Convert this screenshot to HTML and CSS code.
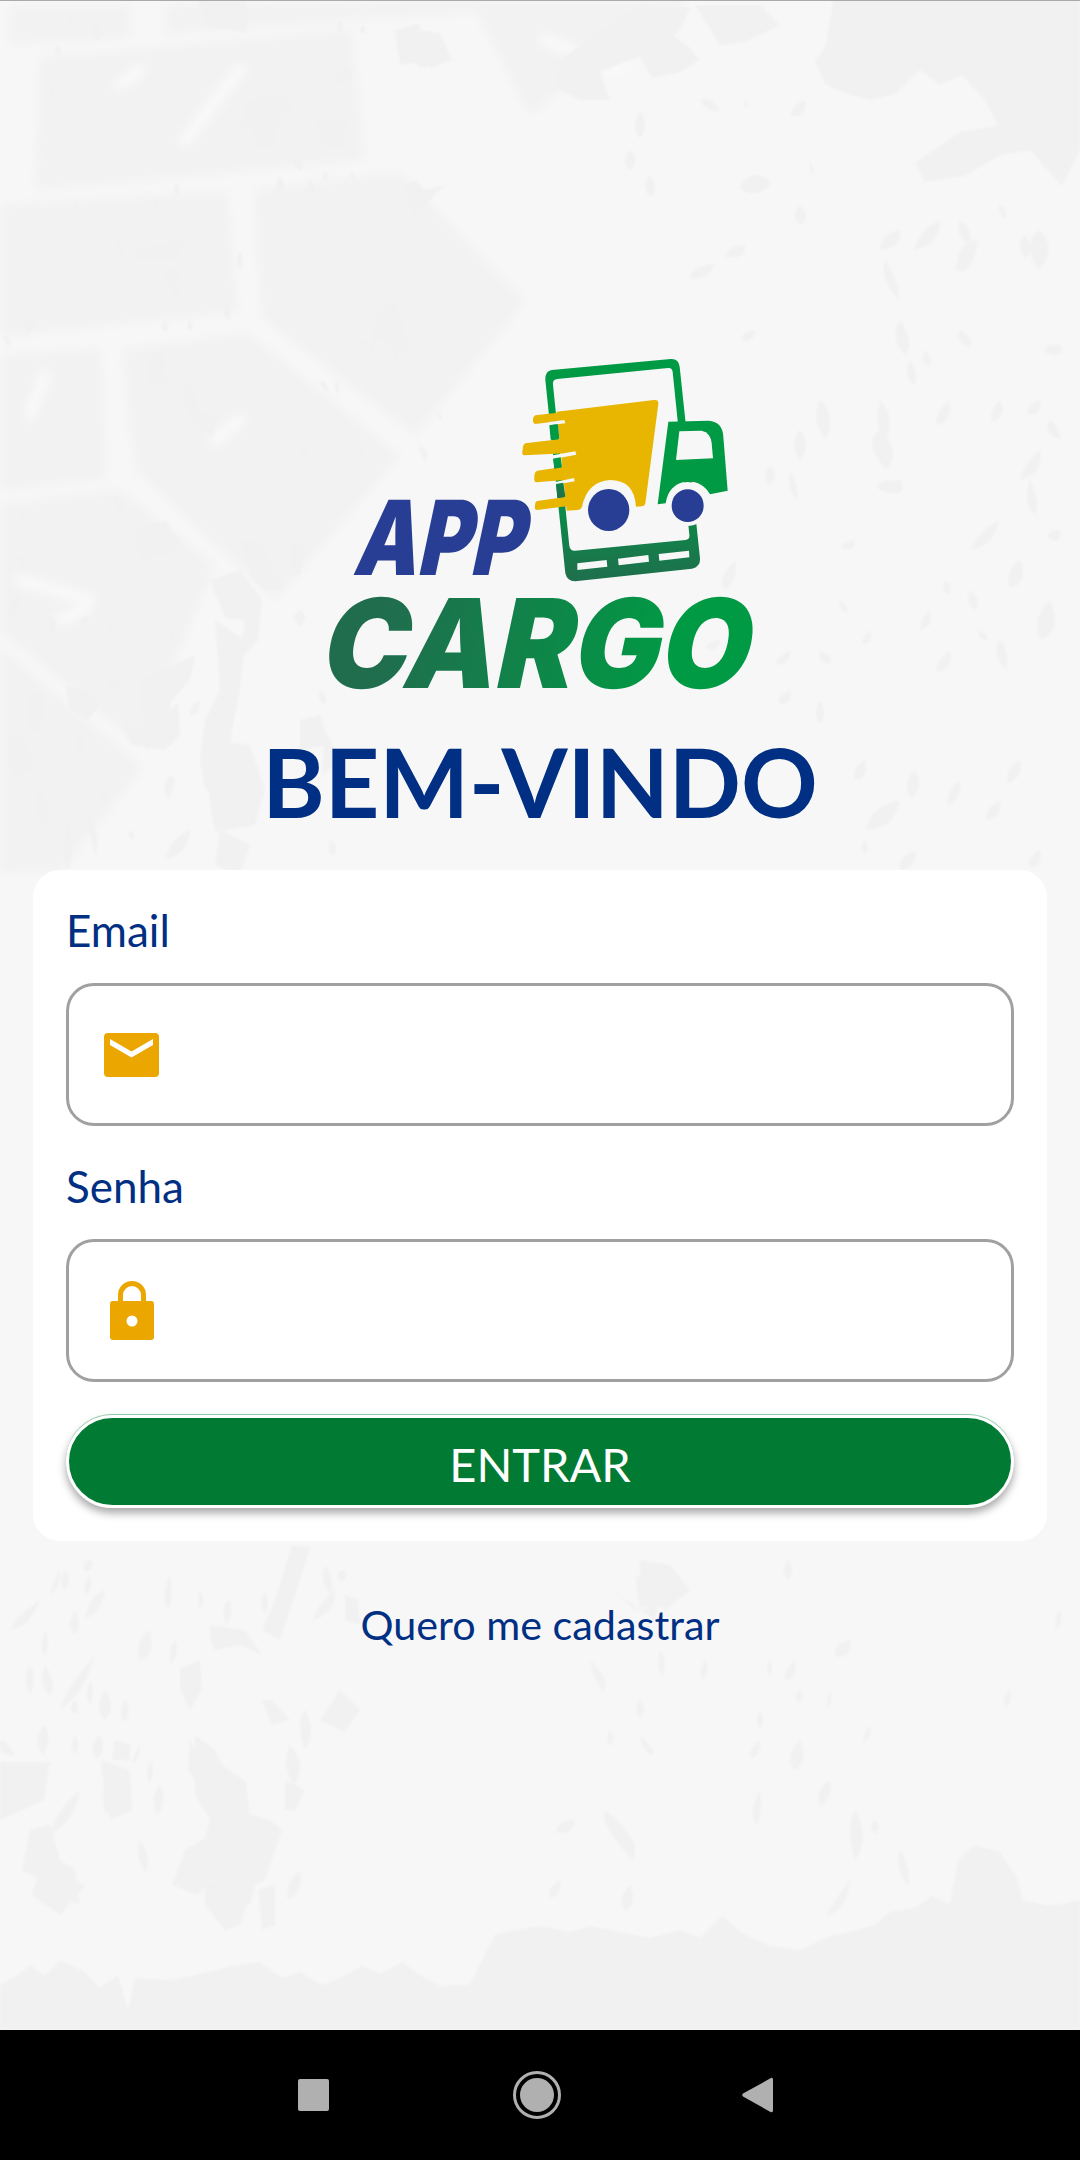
FILE: index.html
```html
<!DOCTYPE html>
<html lang="pt-BR">
<head>
<meta charset="utf-8">
<title>App Cargo</title>
<link rel="stylesheet" href="styles.css">
</head>
<body>
<main class="screen">
  <svg class="texture" viewBox="0 0 1080 2030" aria-hidden="true">
    <defs>
      <filter id="soft" x="-5%" y="-5%" width="110%" height="110%"><feGaussianBlur stdDeviation="5"/></filter>
      <filter id="round" x="-2%" y="-2%" width="104%" height="104%"><feGaussianBlur stdDeviation="1"/></filter>
    </defs>
    <g class="blocks" filter="url(#soft)">
      <polygon points="10,5 130,5 130,38 10,44"/>
      <polygon points="165,5 530,0 470,12 350,20 165,33"/>
      <polygon points="40,58 352,30 364,160 35,190"/>
      <polygon points="0,205 227,192 238,312 0,336"/>
      <polygon points="255,190 400,172 525,302 415,435 262,318"/>
      <polygon points="0,356 100,348 106,478 0,490"/>
      <polygon points="122,350 248,333 400,456 275,600 135,470"/>
      <polygon points="0,505 120,490 215,565 140,745 0,630"/>
      <polygon points="0,648 143,767 60,872 0,872"/>
      <polygon points="540,0 690,0 600,60 530,115 470,0"/>
    </g>
    <g class="streaks" filter="url(#soft)">
      <line x1="185" y1="140" x2="240" y2="70"/>
      <line x1="120" y1="85" x2="140" y2="70"/>
      <line x1="30" y1="415" x2="45" y2="375"/>
      <line x1="215" y1="440" x2="240" y2="420"/>
      <line x1="20" y1="580" x2="90" y2="600"/>
      <line x1="60" y1="620" x2="85" y2="610"/>
      <line x1="545" y1="40" x2="620" y2="70"/>
    </g>
    <g filter="url(#round)">
    <path class="blot" d="M0 2030V1985L18 1975 30 1965 45 1976 60 1960 85 1972 100 1988 118 1975 128 2010 135 1978 170 1980 200 1974 232 1966 260 1962 282 1978 300 1972 322 1985 340 1978 362 1966 380 1974 402 1962 420 1975 440 1986 470 1985 486 1952 496 1934 540 1926 570 1932 590 1926 620 1932 650 1938 680 1930 700 1938 722 1916 745 1935 770 1946 800 1950 830 1936 850 1932 875 1925 890 1912 915 1908 932 1896 950 1905 958 1860 975 1845 1000 1852 1018 1880 1022 1900 1050 1906 1080 1900V2030Z"/>
    <path class="blot" d="M833 0L830 20 825 48 815 60 825 84 850 95 870 100 895 94 920 70 940 85 962 75 985 100 998 126 960 132 915 163 925 182 965 176 1000 155 1030 150 1062 186 1080 150V0Z"/>
    <path class="blot" d="M198 1L246 1 247 33 228 29 210 28 203 15Z
      M560 60L600 30 640 5 690 8 680 30 655 50 625 62 600 72 610 100 580 100 555 88Z
      M625 10L660 25 690 48 700 60 680 72 652 78 630 40Z
      M247 100L282 95 292 110 278 122 275 150 258 148 250 125 240 128Z
      M314 118L340 120 346 150 324 146Z
      M344 65L352 68 350 82 330 83Z
      M395 30L420 23 420 30 440 33 452 60 432 68 418 62 400 65 398 52Z
      M400 45L425 42 442 52 445 62 420 68Z
      M140 248L188 238 176 262 165 260 160 258 135 258Z
      M166 266L180 268 176 288 165 280Z
      M150 353L164 352 166 380 150 394Z
      M180 388L190 385 200 410 216 420 212 436 195 425 185 405Z
      M380 310L396 300 408 350 394 355 376 330Z
      M376 315L392 320 368 355Z
      M403 185L415 180 425 190 445 185 430 200 413 215Z
      M140 525L165 522 180 540 168 555 140 560 136 540Z
      M210 580L240 570 262 600 258 640 240 660 245 620 225 618Z
      M140 680L195 655 190 680 172 700 160 745 145 750Z
      M215 620L245 640 240 690 232 730 225 770 205 790 200 760 205 720 220 690Z
      M205 740L250 745 265 790 255 825 215 832 208 790Z
      M120 725L155 728 178 702 180 735 165 750 132 745Z
      M65 685L85 690 100 705 88 720 70 710Z
      M30 690L45 700 40 730 30 735Z
      M10 730L30 750 32 770 15 775 8 760Z
      M8 740L25 735 28 770 12 780Z
      M240 540L262 545 275 575 285 590 265 590 250 575Z
      M290 540L305 550 300 575 290 575Z
      M220 830L250 845 240 875 215 865Z
      M300 720L320 715 330 745 300 750Z
      M325 730L340 760 322 775Z
      M695 5L760 5 780 25 745 42 720 45Z"/>
    <path class="blot" d="M0 1762L50 1762 44 1800 0 1820Z
      M100 1760L130 1770 132 1810 110 1820 105 1790Z
      M195 1735L215 1750 222 1765 246 1782 250 1815 270 1820 282 1830 265 1880 255 1885 250 1905 225 1890 210 1880 198 1895 172 1885 178 1870 185 1850 205 1838 210 1820 195 1795Z
      M30 1830L50 1825 60 1860 75 1870 80 1905 55 1895 40 1880 22 1870Z
      M40 1870L85 1885 60 1915 32 1895Z
      M205 1880L250 1895 240 1925 225 1930 205 1905Z
      M258 1890L275 1885 275 1925 262 1930Z
      M285 1780L305 1790 295 1810 285 1810Z
      M190 1740L205 1765 200 1785 188 1770Z
      M292 1545L310 1548 295 1595 280 1640 262 1630 275 1600Z
      M345 1595L358 1600 360 1625 345 1620Z
      M340 1690L360 1710 345 1732 320 1720Z
      M180 1668L200 1660 202 1690 190 1710 180 1690Z
      M210 1625L245 1630 262 1655 240 1645 215 1650 210 1640Z
      M262 1700L272 1700 290 1720 272 1725Z
      M115 1740L130 1745 130 1760 112 1760Z
      M640 1560L670 1565 690 1590 665 1610 640 1595Z
      M635 1575L660 1590 655 1620 640 1610Z
      M615 1592L640 1610 660 1600 650 1605 632 1610 640 1615Z"/>
    <g class="blot">
      <path d="M70 15q8 7 0 15q-7-7 0-15zM97 25q10 10 0 15q-10-8 0-15zM58 45q6 10 0 12q-5-5 0-12zM52 85q6 6 0 12q-6-6 0-12zM340 20q6 8 0 14q-6-6 0-14zM363 25q6 5 0 9q-6-4 0-9zM322 85q7 4 5 10q-7-4-5-10zM345 118q5 8 0 13q-5-5 0-13zM323 140q5 2 4 5q-5-2-4-5zM295 155q10 3 6 16q-10-4-6-16zM280 175q8 12 0 20q-8-8 0-20zM310 178q8 12 0 18q-6-8 0-18zM350 172q6 0 5 8q-5 0-5-8zM325 170q6 6 0 12q-5-4 0-12zM177 182q6 8 0 14q-6-8 0-14zM155 195q5 10 0 14q-5-4 0-14zM75 200q4 4 0 8q-4-4 0-8zM115 240q10 0 8 15q-8 0-8-15zM170 270q-6 14 10 30q0-18-10-30zM165 320q7 7 0 12q-7-5 0-12zM190 320q5 6 0 12q-5-6 0-12zM35 312q-12 10-10 25q12-8 10-25zM5 335q8 4 5 12q-8-4-5-12zM240 250q-6 10 0 20q6-8 0-20zM275 300q8 4 6 10q-8-4-6-10zM225 300q8 8 4 22q-8-8-4-22zM337 380q5 8 0 15q-5-7 0-15zM365 338q5 10 0 15q-5-5 0-15zM397 350q5 6 0 12q-5-6 0-12zM437 412q6 2 5 8q-6-2-5-8zM300 440q-5 15 5 18q5-10-5-18zM360 440q6 12 0 15q-6-5 0-15zM420 445q10 8 6 16q-8-8-6-16zM320 380q8 2 8 12q-8-2-8-12z"/>
      <path d="M22 510q6 8 0 15q-6-7 0-15zM115 495q12 8 6 20q-10-8-6-20zM18 555q10 0 8 15q-8 0-8-15zM165 520q-5 10 5 18q5-8-5-18zM50 615q10 4 4 22q-8-6-4-22zM18 590q-10 8-8 30q12-6 8-30zM115 672q8 10-2 22q-8-12 2-22zM85 615q8 4 0 12q-8-4 0-12zM130 620q10 2 8 10q-8 0-8-10zM170 630q8 5 5 12q-6-5-5-12zM110 620q8 5 2 15q-6-4-2-15zM200 700q-10 3-10 16q10-2 10-16zM300 610q-12 8 0 16q10-8 0-16zM320 690q8 5 5 15q-8-4-5-15zM80 730q-6 20 0 30q6-15 0-30zM100 790q10 6 6 18q-8-6-6-18zM170 775q10 4-2 24q-8-10 2-24zM190 830q-20 8-24 28q22-2 24-28zM285 800q-12 3-12 14q10 0 12-14zM330 840q10 5 4 16q-8-5-4-16zM85 810q6 30 10 45q8-20-10-45zM68 820q-8 40 0 50q8-15 0-50zM40 790q-10 16 4 40q14-16-4-40zM130 830q4 2 4 10q-8-2-4-10z"/>
      <path d="M612 40q-14 8-14 18q12 0 14-18zM720 10q-6 12 4 16q8-10-4-16zM630 150q10 10 0 20q-10-8 0-20zM640 110q10 16 0 28q-10-8 0-28zM650 175q-10 10 0 22q10-8 0-22zM700 100q6 12 20 12q-6-16-20-12zM677 20q-12 0-16 16q14 2 16-16zM746 100q-4 6 0 8q4-4 0-8zM752 175q18 0 18 10q-14 14-30 4q0-8 12-14zM745 245q-16 0-20 12q20 4 20-12zM715 265q-18-2-26 12q16 6 26-12zM755 330q-14 2-14 10q14 4 14-10zM800 205q-10 10 0 20q12-6 0-20zM805 100q-14 4-14 16q16 2 14-16zM810 160q4 10 4 16q-6-8-4-16zM940 220q-20 10-26 30q26-4 26-30zM1000 205q-4 8 6 14q2-10-6-14zM960 220q14 10 10 24q-16-8-10-24zM978 240q-20 0-22 30q16 8 22-30zM1025 235q-10 10 0 24q10-10 0-24zM900 230q-20 4-20 20q22-2 20-20zM885 260q16 26 14 40q-20-20-14-40zM900 320q16 22 5 35q-16-16-5-35zM925 350q10 10 4 16q-10-4-4-16zM880 400q-6 30 5 40q12-20-5-40zM880 430q-18 10 6 40q16-18-6-40zM950 400q-14 10-14 25q16-2 14-25zM910 360q10 16 4 25q-12-10-4-25zM960 330q-6 10 10 18q4-10-10-18zM1000 400q-8 5-4 20q10-8 4-20zM1040 230q-20 10-2 40q20-20 2-40zM1060 345q-20 0-14 8q20 6 14-8z"/>
      <path d="M800 430q-12 12 0 30q12-16 0-30zM770 465q10 10 0 20q-10-8 0-20zM735 560q-20 20-10 30q14-10 10-30zM820 400q16 14 6 40q-16-20-6-40zM855 540q-14 2-14 8q14 6 14-8zM900 480q-30 0-20 10q30 10 20-10zM945 580q-6 10 4 14q4-10-4-14zM790 470q8 14 8 30q-12-10-8-30zM1000 520q-20 10-30 30q22-2 30-30zM1000 400q-14 14-6 22q14-8 6-22zM1040 400q-14 4-12 14q14 4 12-14zM1040 450q-14 10-20 30q24-6 20-30zM970 590q12 10 6 20q-12-4-6-20zM1050 420q-10 10 10 20q0-14-10-20zM1030 480q10 20 6 35q-14-10-6-35zM1060 530q-14 0-12 8q14 8 12-8zM1020 560q-16 10-10 28q20-6 10-28zM980 630q8 4 8 10q-12 0-8-10zM1050 600q-18 16-10 40q24-10 10-40zM1000 640q-10 14 6 30q4-20-6-30zM930 610q-10 10-10 20q14-2 10-20zM950 650q-14 10-14 22q18-2 14-22zM720 640q-14 2-14 8q12 6 14-8zM870 630q-8 8-8 14q12 0 8-14zM840 600q8 6 8 12q-10 0-8-12zM820 650q14 6 10 14q-14-2-10-14zM790 650q-14 8-14 14q16 2 14-14zM915 770q-14 12-4 28q14-10 4-28zM900 800q-30 6-34 30q30-2 34-30zM960 780q-14 10-12 26q14-6 12-26zM1020 760q-16 8-12 24q16-8 12-24zM1000 800q-14 8-14 20q16 0 14-20zM790 690q-14 6-10 14q14 0 10-14zM820 700q8 12 0 24q-8-10 0-24zM915 850q-20 10-14 20q18-4 14-20zM865 760q-14 8-10 20q14 0 10-20zM865 840q-6 4 0 14q6-6 0-14zM1040 850q-14 8-10 18q14-2 10-18zM810 780q-6 10 0 16q6-8 0-16z"/>
      <path d="M60 1570q-6 10-10 24q12-6 10-24zM92 1560q-10 0-8 10q10 4 8-10zM65 1570q8 10 0 20q-8-8 0-20zM90 1575q-8 10-4 20q8-8 4-20zM105 1590q-16 6-20 28q16-4 20-28zM170 1575q4 24-2 34q-8-14 2-34zM200 1590q-4 10 0 20q6-8 0-20zM230 1600q-10 0-4 25q8-8 4-25zM265 1590q-6 14 0 24q6-10 0-24zM40 1600q-24 16-30 30q20-2 30-30zM75 1610q-10 16 0 24q8-8 0-24zM45 1630q-6 16 0 26q6-14 0-26zM150 1630q-16 10-10 30q16-4 10-30zM175 1640q-8 10-4 24q10-12 4-24zM30 1665q-8 14 0 30q8-16 0-30zM45 1665q-8 20 5 30q8-10-5-30zM95 1655q-26 30-36 55q26-16 36-55zM90 1680q-6 16 0 24q6-12 0-24zM125 1700q-8 12 0 22q8-12 0-22zM105 1690q-12 20 0 30q12-10 0-30zM75 1700q-8 8 0 14q6-4 0-14zM45 1725q-14 14-2 30q10-14 2-30zM75 1735q-6 12 0 20q6-12 0-20zM100 1735q-12 10-4 24q12-8 4-24zM140 1745q-4 4-8 18q8-2 8-18zM110 1770q-12 20-4 45q12-18 4-45zM150 1760q-6 14 0 24q6-14 0-24zM160 1785q-12 14-2 30q10-14 2-30zM80 1790q-24 20-30 44q24-10 30-44zM325 1565q-6 16 6 30q4-16-6-30zM305 1710q-10 14 0 40q12-20 0-40zM345 1570q-10 0-6 10q10 4 6-10zM335 1590q-16 12-22 30q24-8 22-30zM290 1745q-10 20 4 40q14-20-4-40zM0 1740q12 4 14 16q-16 0-14-16zM60 1880q-6 16 4 20q8-10-4-20zM140 1840q-6 16 6 34q6-18-6-34zM300 1870q-16 14-12 30q16-8 12-30z"/>
      <path d="M640 1700q-8 10 0 18q8-8 0-18zM660 1650q-4 16 2 26q6-14-2-26zM590 1660q4 22 14 32q6-14-14-32zM610 1730q-6 8 0 16q6-8 0-16zM575 1820q-16 0-20 12q18 4 20-12zM605 1810q-6 14 28 50q10-20-28-50zM640 1735q12 10 14 20q-12-2-14-20zM795 1660q-12 10-10 20q14-2 10-20zM850 1640q-18 4-14 16q16 4 14-16zM800 1690q6 10-2 12q-6-6 2-12zM770 1660q-6 10 0 16q4-10 0-16zM830 1690q-4 8-2 18q6-8 2-18zM800 1740q-16 16-6 30q16-8 6-30zM760 1710q-6 10 0 20q6-8 0-20zM830 1780q-16 10-10 26q14-8 10-26zM760 1790q-12 20-4 36q8-16 4-36zM760 1740q-10 6-10 18q12-2 10-18zM870 1725q-8 10-6 18q8-6 6-18zM788 1560q-8 10 0 20q8-10 0-20zM705 1660q-8 12-2 20q8-10 2-20zM855 1810q-10 16 0 50q16-22 0-50zM875 1820q-8 6 0 14q8-6 0-14zM1060 1610q-6 8-4 20q8-8 4-20zM1010 1690q-10 8-4 18q8-8 4-18zM850 1880q-18 24-24 36q22-6 24-36zM900 1850q-6 20 8 36q4-18-8-36zM960 1930q-6 30 0 40q6-20 0-40zM630 1885q-14 14-4 26q12-8 4-26zM560 1880q-14 8-10 18q12-2 10-18z"/>
    </g>
    </g>
  </svg>

  <svg class="logo" viewBox="0 0 1440 1140" role="img" aria-label="App Cargo">
    <defs>
      <linearGradient id="phoneGrad" x1="0" y1="0" x2="0" y2="1"><stop offset="0.5" stop-color="#009a44"/><stop offset="1" stop-color="#1f6f4d"/></linearGradient>
      <linearGradient id="cargoGrad" gradientUnits="userSpaceOnUse" x1="60" y1="0" x2="1050" y2="0"><stop offset="0.1" stop-color="#206d4e"/><stop offset="1" stop-color="#009a44"/></linearGradient>
    </defs>
    <path class="logo-phone" fill-rule="evenodd" d="M755 90L1112 57Q1136 55 1139 80L1200 655Q1202 680 1176 686L826 724Q802 725 796 700L736 120Q735 93 755 90ZM772 117Q757 118 759 134L808 618Q811 634 826 632L1156 600Q1170 598 1168 584L1118 96Q1116 82 1104 84ZM832 670L832 690 922 680 920 660ZM954 656L956 676 1047 665 1045 645ZM1076 642L1078 662 1168 652 1167 632Z"/>
    <circle class="logo-bg" cx="1163" cy="492" r="66"/>
    <path class="logo-cargo" d="M770 215L1062 180Q1076 178 1075 192L1036 490Q1034 499 1025 499L1008 500Q1003 420 930 420Q862 424 846 500Q843 509 832 510L800 512Z"/>
    <path class="logo-cab" d="M1105 245L1226 242Q1268 245 1270 290L1283 452 1230 463Q1205 420 1155 425Q1105 435 1097 490L1073 493Z"/>
    <path class="logo-bg" d="M1138 274L1205 272Q1232 278 1235 310L1239 355 1128 360Z"/>
    <path class="logo-cargo" d="M706 226L800 215 802 240 706 252Q696 250 700 232ZM676 310L790 296 830 328 828 338 672 346Q664 344 668 330 668 314 676 310ZM712 392L790 380 795 420 708 427Q700 426 704 402 705 394 712 392ZM712 483L800 470 805 498 712 510Q702 510 705 498 705 485 712 483Z"/>
    <path class="logo-bg" d="M747 246L793 240 796 250 747 256ZM758 346L826 334 829 344 758 358ZM766 426L822 414 824 424 766 434Z"/>
    <path class="logo-phone" d="M748 256L774 253 778 296 752 299ZM759 356L782 352 786 382 763 386ZM768 432L790 428 796 470 772 474Z"/>
    <ellipse class="logo-wheel" cx="926" cy="510" rx="62" ry="63"/>
    <ellipse class="logo-wheel" cx="1163" cy="497" rx="48" ry="49"/>
    <text class="logo-app" transform="translate(155 705) skewX(-12)" textLength="510" lengthAdjust="spacingAndGlyphs">APP</text>
    <text class="logo-name" transform="translate(52 1044) skewX(-12)" textLength="1285" lengthAdjust="spacingAndGlyphs">CARGO</text>
  </svg>

  <h1 class="title">BEM-VINDO</h1>

  <form class="card">
    <label class="label" for="email">Email</label>
    <div class="field">
      <span class="field-icon">
        <svg class="icon-mail" viewBox="0 0 55 44" aria-hidden="true"><path fill-rule="evenodd" d="M4 0H51Q55 0 55 4V40Q55 44 51 44H4Q0 44 0 40V4Q0 0 4 0ZM6 6V12L27.5 24.5 49 12V6L27.5 18.5Z"/></svg>
      </span>
      <input class="input" id="email" type="email">
    </div>
    <label class="label label-next" for="senha">Senha</label>
    <div class="field">
      <span class="field-icon">
        <svg class="icon-lock" viewBox="0 0 44 59" aria-hidden="true"><path fill-rule="evenodd" d="M8 20V14A14 14 0 0 1 36 14V20H41Q44 20 44 23V56Q44 59 41 59H3Q0 59 0 56V23Q0 20 3 20ZM13 20H31V14A9 9 0 0 0 13 14ZM22 34.500A5.500 5.500 0 1 0 22 45.500 5.500 5.500 0 1 0 22 34.500Z"/></svg>
      </span>
      <input class="input" id="senha" type="password">
    </div>
    <button class="submit" type="button">ENTRAR</button>
  </form>

  <a class="signup" href="#">Quero me cadastrar</a>
</main>
<nav class="navbar" aria-label="Navegação do sistema">
  <span class="nav-square"></span>
  <span class="nav-home"><span class="nav-home-dot"></span></span>
  <svg class="nav-back" viewBox="0 0 31 36" aria-hidden="true"><path d="M29 1Q31 0 31 3V33Q31 36 28.500 35L1 19.500Q-.5 18 1 16.500Z"/></svg>
</nav>
</body>
</html>
```

FILE: styles.css
```css
* { box-sizing: border-box; }

html, body {
  margin: 0;
  padding: 0;
}

body {
  width: 1080px;
  height: 2160px;
  overflow: hidden;
  background: #000;
  font-family: Lato, "Liberation Sans", sans-serif;
  color: #012f83;
}

.screen {
  position: relative;
  isolation: isolate;
  height: 2030px;
  padding-top: 340px;
  display: flex;
  flex-direction: column;
  align-items: center;
  background: #f7f7f7;
  border-top: 1px solid #aaa;
  overflow: hidden;
}

.texture {
  position: absolute;
  top: -1px;
  left: 0;
  width: 1080px;
  height: 2030px;
  z-index: -1;
}

.blocks polygon { fill: #f2f2f2; }
.streaks line { stroke: #f9f9f9; stroke-width: 12; stroke-linecap: round; }
.blot { fill: #f1f1f1; }

.logo {
  display: block;
  width: 480px;
  height: 380px;
  margin-top: -1px;
  margin-bottom: 6px;
  overflow: visible;
}

.logo-phone { fill: url(#phoneGrad); }
.logo-bg { fill: #f7f7f7; }
.logo-cargo { fill: #e8b500; }
.logo-cab { fill: #009a44; }
.logo-wheel { fill: #273e94; }

.logo-app,
.logo-name {
  font-family: Inter, Lato, sans-serif;
  font-weight: 900;
}

.logo-app { font-size: 310px; fill: #273e94; }
.logo-name { font-size: 371px; fill: url(#cargoGrad); }

.title {
  margin: 0 0 34px;
  font-size: 95px;
  line-height: 110px;
  font-weight: 700;
  color: #012f83;
}

.card {
  width: 1014px;
  height: 671px;
  padding: 35px 33px 0;
  display: flex;
  flex-direction: column;
  background: #fff;
  border-radius: 27px;
}

.label {
  display: block;
  font-size: 44px;
  line-height: 50px;
  margin-bottom: 28px;
  color: #012f83;
}

.label-next { margin-top: 35px; }

.field {
  height: 143px;
  padding-left: 35px;
  display: flex;
  align-items: center;
  gap: 24px;
  border: 3px solid #a0a0a0;
  border-radius: 28px;
  background: #fff;
}

.field-icon {
  width: 55px;
  display: flex;
  justify-content: center;
  flex: none;
}

.icon-mail { display: block; width: 55px; height: 44px; fill: #eba600; }
.icon-lock { display: block; width: 44px; height: 59px; fill: #eba600; }

.input {
  flex: 1;
  min-width: 0;
  height: 100%;
  border: 0;
  outline: 0;
  background: transparent;
  font: inherit;
  font-size: 42px;
  border-radius: 0 28px 28px 0;
}

.submit {
  margin-top: 33px;
  height: 93px;
  padding: 5px 0 0;
  border: 3px solid #fff;
  border-radius: 47px;
  background: #017a33;
  color: #fff;
  font-family: inherit;
  font-size: 47px;
  box-shadow: 0 -1px 0 #8fc9a8, 0 5px 8px rgba(0, 0, 0, 0.35);
}

.signup {
  margin-top: 59px;
  font-size: 41.3px;
  line-height: 48px;
  color: #012f83;
  text-decoration: none;
}

.navbar {
  height: 130px;
  padding-left: 298px;
  display: flex;
  align-items: center;
  background: #000;
}

.nav-square {
  width: 31px;
  height: 32px;
  border-radius: 2px;
  background: #b0b0b0;
  flex: none;
}

.nav-home {
  width: 48px;
  height: 48px;
  margin-left: 184px;
  border: 3px solid #b0b0b0;
  border-radius: 50%;
  display: flex;
  align-items: center;
  justify-content: center;
  flex: none;
}

.nav-home-dot {
  width: 34px;
  height: 34px;
  border-radius: 50%;
  background: #b0b0b0;
}

.nav-back {
  width: 31px;
  height: 36px;
  margin-left: 181px;
  fill: #b0b0b0;
  flex: none;
}
```
